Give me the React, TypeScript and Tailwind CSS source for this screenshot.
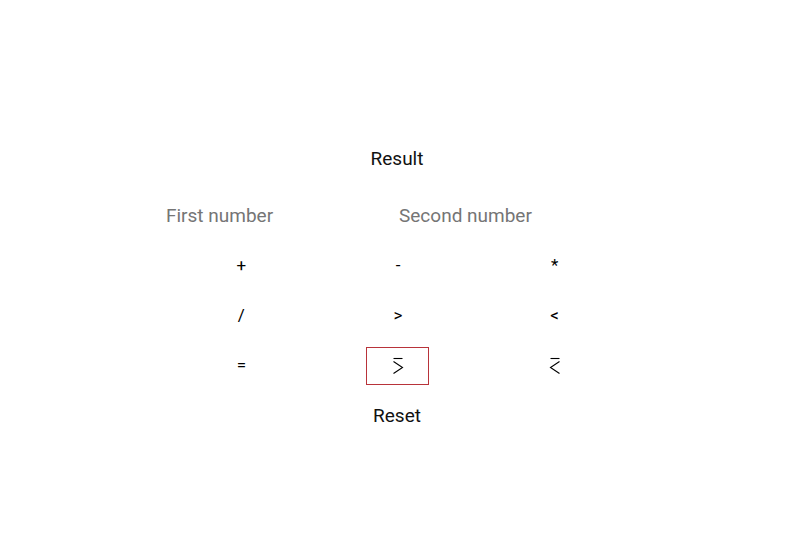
import React from "react";

const Sym = ({ s }: { s: string }) => <span>{s}</span>;

const GeTop = ({ flip }: { flip?: boolean }) => (
  <svg width="12" height="20" viewBox="0 0 12 20" className="block">
    <line x1="1.5" y1="2.5" x2="10.5" y2="2.5" stroke="#000" strokeWidth="1.1" />
    {flip ? (
      <polyline points="10.5,5.5 1.5,11.5 10.5,17.5" fill="none" stroke="#000" strokeWidth="1.1" />
    ) : (
      <polyline points="1.5,5.5 10.5,11.5 1.5,17.5" fill="none" stroke="#000" strokeWidth="1.1" />
    )}
  </svg>
);

export default function App() {
  const cells: { k: string; node: React.ReactNode; focus?: boolean }[] = [
    { k: "+", node: <Sym s="+" /> },
    { k: "-", node: <Sym s="-" /> },
    { k: "*", node: <Sym s="*" /> },
    { k: "/", node: <Sym s="/" /> },
    { k: ">", node: <Sym s=">" /> },
    { k: "<", node: <Sym s="<" /> },
    { k: "=", node: <Sym s="=" /> },
    { k: "ge", node: <GeTop />, focus: true },
    { k: "le", node: <GeTop flip /> },
  ];
  return (
    <div
      className="min-h-[541px] w-[790px] bg-white text-black pl-[4px] pt-[147px]"
      style={{ fontFamily: "Roboto, 'Liberation Sans', sans-serif" }}
    >
      <div className="mx-auto w-[470px] flex flex-col items-center">
        <div className="h-[24px] leading-[24px] text-[19px] text-[#111]">Result</div>
        <div className="mt-[25px] flex w-[466px] self-start">
          <input
            className="w-[233px] h-[38px] pl-[4px] text-[19px] outline-none placeholder:text-[#757575] bg-transparent"
            placeholder="First number"
          />
          <input
            className="w-[233px] h-[38px] pl-[4px] text-[19px] outline-none placeholder:text-[#757575] bg-transparent"
            placeholder="Second number"
          />
        </div>
        <div className="mt-[13px] ml-[2px] grid grid-cols-3 w-[470px] gap-y-[12px]">
          {cells.map((c) => (
            <div key={c.k} className="flex justify-center">
              <button
                className={
                  "w-[63px] h-[38px] flex items-center justify-center text-[17px] text-black bg-transparent " +
                  (c.focus ? "border border-[#b8333a]" : "border border-transparent")
                }
              >
                {c.node}
              </button>
            </div>
          ))}
        </div>
        <button className="mt-[12px] h-[38px] w-[63px] text-[19px] text-[#111] bg-transparent">
          Reset
        </button>
      </div>
    </div>
  );
}
